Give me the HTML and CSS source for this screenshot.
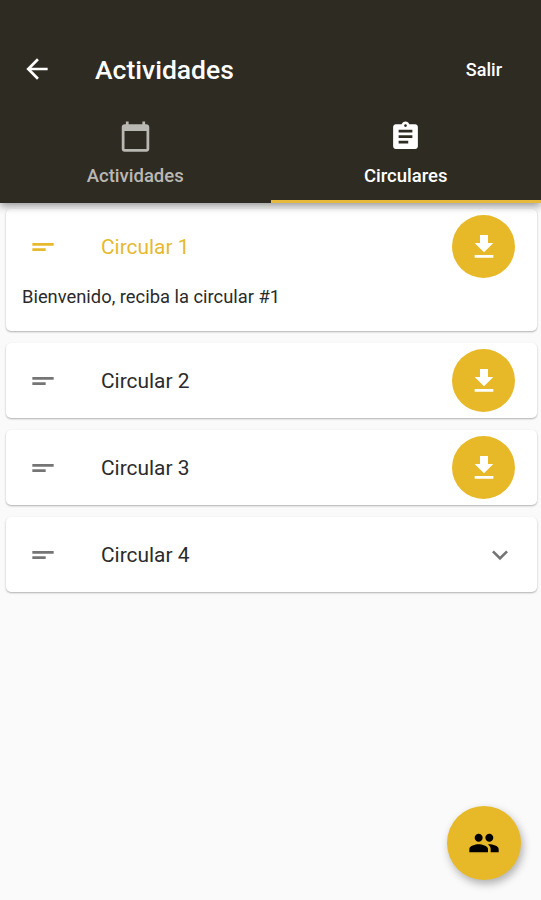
FILE: index.html
```html
<!DOCTYPE html>
<html lang="es">

<head>
  <meta charset="UTF-8">
  <meta name="viewport" content="width=device-width, initial-scale=1.0">
  <title>Actividades</title>
  <link rel="stylesheet" href="styles.css">
</head>

<body>
  <header>
    <div class="toolbar">
      <svg class="icon" viewBox="0 0 24 24"><path d="M20 11H7.83l5.59-5.59L12 4l-8 8 8 8 1.41-1.41L7.83 13H20v-2z"/></svg>
      <h1>Actividades</h1>
      <a class="logout">Salir</a>
    </div>
    <nav>
      <a class="tab">
        <svg class="icon" viewBox="0 0 24 24"><path d="M20 3h-1V1h-2v2H7V1H5v2H4c-1.1 0-2 .9-2 2v16c0 1.1.9 2 2 2h16c1.1 0 2-.9 2-2V5c0-1.1-.9-2-2-2zm0 18H4V8h16v13z"/></svg>
        <span>Actividades</span>
      </a>
      <a class="tab active">
        <svg class="icon" viewBox="0 0 24 24"><path d="M19 3h-4.18C14.4 1.84 13.3 1 12 1c-1.3 0-2.4.84-2.82 2H5c-1.1 0-2 .9-2 2v14c0 1.1.9 2 2 2h14c1.1 0 2-.9 2-2V5c0-1.1-.9-2-2-2zm-7 0c.55 0 1 .45 1 1s-.45 1-1 1-1-.45-1-1 .45-1 1-1zm2 14H7v-2h7v2zm3-4H7v-2h10v2zm0-4H7V7h10v2z"/></svg>
        <span>Circulares</span>
      </a>
    </nav>
  </header>

  <main>
    <section class="card open">
      <div class="row">
        <svg class="icon" viewBox="0 0 24 24"><path d="M4 9h16v2H4V9zm0 4h10v2H4v-2z"/></svg>
        <h2>Circular 1</h2>
        <button class="download"><svg class="icon" viewBox="0 0 24 24"><path d="M19 9h-4V3H9v6H5l7 7 7-7zM5 18v2h14v-2H5z"/></svg></button>
      </div>
      <p>Bienvenido, reciba la circular #1</p>
    </section>
    <section class="card">
      <div class="row">
        <svg class="icon" viewBox="0 0 24 24"><path d="M4 9h16v2H4V9zm0 4h10v2H4v-2z"/></svg>
        <h2>Circular 2</h2>
        <button class="download"><svg class="icon" viewBox="0 0 24 24"><path d="M19 9h-4V3H9v6H5l7 7 7-7zM5 18v2h14v-2H5z"/></svg></button>
      </div>
    </section>
    <section class="card">
      <div class="row">
        <svg class="icon" viewBox="0 0 24 24"><path d="M4 9h16v2H4V9zm0 4h10v2H4v-2z"/></svg>
        <h2>Circular 3</h2>
        <button class="download"><svg class="icon" viewBox="0 0 24 24"><path d="M19 9h-4V3H9v6H5l7 7 7-7zM5 18v2h14v-2H5z"/></svg></button>
      </div>
    </section>
    <section class="card">
      <div class="row">
        <svg class="icon" viewBox="0 0 24 24"><path d="M4 9h16v2H4V9zm0 4h10v2H4v-2z"/></svg>
        <h2>Circular 4</h2>
        <svg class="icon chevron" viewBox="0 0 24 24"><path d="M16.59 8.59L12 13.17 7.41 8.59 6 10l6 6 6-6z"/></svg>
      </div>
    </section>
  </main>

  <button class="fab"><svg class="icon" viewBox="0 0 24 24"><path d="M16 11c1.66 0 2.99-1.34 2.99-3S17.66 5 16 5c-1.66 0-3 1.34-3 3s1.34 3 3 3zm-8 0c1.66 0 2.99-1.34 2.99-3S9.66 5 8 5C6.34 5 5 6.34 5 8s1.34 3 3 3zm0 2c-2.33 0-7 1.17-7 3.5V19h14v-2.5c0-2.33-4.67-3.5-7-3.5zm8 0c-.29 0-.62.02-.97.05 1.16.84 1.97 1.97 1.97 3.45V19h6v-2.5c0-2.33-4.67-3.5-7-3.5z"/></svg></button>
</body>

</html>
```
FILE: styles.css
```css
:root {
  font-family: Roboto, sans-serif;
}

* {
  box-sizing: border-box;
}

body {
  background-color: #fafafa;
  color: #2b2b2b;
  margin: 0;
  min-height: 900px;
}

h1, h2, p {
  margin: 0;
}

button {
  border: none;
  border-radius: 50%;
  padding: 0;
  background-color: #e7b928;
  display: flex;
  align-items: center;
  justify-content: center;
}

.icon {
  width: 32px;
  height: 32px;
  fill: currentColor;
  display: block;
  flex: none;
}

header {
  position: relative;
  height: 203px;
  padding-top: 32px;
  background-color: #2e2b23;
  color: white;
  box-shadow: 0 3px 8px rgba(0, 0, 0, 0.4);
}

.toolbar {
  height: 74px;
  display: flex;
  align-items: center;
  padding: 0 39px 0 21px;
}

.toolbar h1 {
  flex: 1;
  margin-left: 42px;
  font-size: 26.5px;
  font-weight: 500;
}

.logout {
  font-size: 18px;
  font-weight: 500;
}

nav {
  display: flex;
  height: 97px;
}

.tab {
  flex: 1;
  display: flex;
  flex-direction: column;
  align-items: center;
  padding-top: 14px;
  border-bottom: 3px solid transparent;
  font-size: 18.5px;
  font-weight: 500;
  line-height: 22px;
  color: #bab8b3;
}

.tab .icon {
  width: 33px;
  height: 33px;
  margin-bottom: 12px;
}

.tab.active {
  color: white;
  border-color: #e7b93c;
}

main {
  padding: 6px 4px 0 6px;
}

.card {
  height: 75px;
  margin-bottom: 12px;
  background-color: white;
  border-radius: 5px;
  box-shadow: 0 1px 2px rgba(0, 0, 0, 0.3);
}

.card.open {
  height: 122px;
}

.row {
  height: 75px;
  display: flex;
  align-items: center;
  padding: 0 21px;
  color: #757575;
}

.row h2 {
  flex: 1;
  margin-left: 42px;
  padding-top: 1px;
  font-size: 20.9px;
  font-weight: 400;
  color: #2b2b2b;
}

.open .row,
.open h2 {
  color: #e7b92f;
}

.row .download {
  width: 63px;
  height: 63px;
  margin-right: 1px;
  color: white;
}

.card p {
  padding-left: 16px;
  font-size: 18.35px;
  line-height: 26px;
}

.fab {
  position: fixed;
  right: 20px;
  bottom: 20px;
  width: 74px;
  height: 74px;
  color: black;
  box-shadow: 2px 4px 9px rgba(0, 0, 0, 0.3);
}
```
